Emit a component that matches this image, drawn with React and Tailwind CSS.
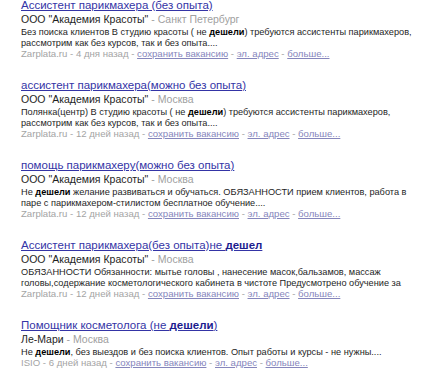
import React from 'react';

const jobs = [
  {
    title: [{ t: 'Ассистент парикмахера (без опыта)' }],
    company: 'ООО "Академия Красоты"',
    city: 'Санкт Петербург',
    snippet: [
      [
        { t: 'Без поиска клиентов В студию красоты ( не ' },
        { t: 'дешели', b: true },
        { t: ') требуются ассистенты парикмахеров,' },
      ],
      [{ t: 'рассмотрим как без курсов, так и без опыта....' }],
    ],
    source: 'Zarplata.ru',
    age: '4 дня назад',
  },
  {
    title: [{ t: 'ассистент парикмахера(можно без опыта)' }],
    company: 'ООО "Академия Красоты"',
    city: 'Москва',
    snippet: [
      [
        { t: 'Полянка(центр) В студию красоты ( не ' },
        { t: 'дешели', b: true },
        { t: ') требуются ассистенты парикмахеров,' },
      ],
      [{ t: 'рассмотрим как без курсов, так и без опыта....' }],
    ],
    source: 'Zarplata.ru',
    age: '12 дней назад',
  },
  {
    title: [{ t: 'помощь парикмахеру(можно без опыта)' }],
    company: 'ООО "Академия Красоты"',
    city: 'Москва',
    snippet: [
      [
        { t: 'Не ' },
        { t: 'дешели', b: true },
        { t: ' желание развиваться и обучаться. ОБЯЗАННОСТИ прием клиентов, работа в' },
      ],
      [{ t: 'паре с парикмахером-стилистом бесплатное обучение....' }],
    ],
    source: 'Zarplata.ru',
    age: '12 дней назад',
  },
  {
    title: [{ t: 'Ассистент парикмахера(без опыта)не ' }, { t: 'дешел', b: true }],
    company: 'ООО "Академия Красоты"',
    city: 'Москва',
    snippet: [
      [{ t: 'ОБЯЗАННОСТИ Обязанности: мытье головы , нанесение масок,бальзамов, массаж' }],
      [{ t: 'головы,содержание косметологического кабинета в чистоте Предусмотрено обучение за' }],
    ],
    source: 'Zarplata.ru',
    age: '12 дней назад',
  },
  {
    title: [{ t: 'Помощник косметолога (не ' }, { t: 'дешели', b: true }, { t: ')' }],
    company: 'Ле-Мари',
    city: 'Москва',
    snippet: [
      [
        { t: 'Не ' },
        { t: 'дешели', b: true },
        { t: ', без выездов и без поиска клиентов. Опыт работы и курсы - не нужны....' },
      ],
    ],
    source: 'ISIO',
    age: '6 дней назад',
  },
];

function JobResult({ job }) {
  return (
    <div className="whitespace-nowrap">
      <a href="#" className="block text-[11.5px] leading-[11px] text-[#3434a6] underline underline-offset-[1px] decoration-[#3434a6]">
        {job.title.map((p, i) => (
          <span key={i} className={p.b ? 'font-bold text-[#1c1c8e]' : ''}>{p.t}</span>
        ))}
      </a>
      <div className="mt-[2px] text-[10.5px] leading-[12px] text-[#1e1e1e]">
        {job.company} <span className="text-[#a0a0a0]">- {job.city}</span>
      </div>
      <div className="mt-[2px] text-[9.2px] leading-[11px] text-[#1e1e1e]">
        {job.snippet.map((line, li) => (
          <div key={li}>
            {line.map((p, i) => (
              <span key={i} className={p.b ? 'font-bold text-black' : ''}>{p.t}</span>
            ))}
          </div>
        ))}
      </div>
      <div className="text-[9.6px] leading-[10px] text-[#a4a4a4]">
        {job.source} - {job.age} -{' '}
        <a href="#" className="text-[#8686bc] underline">сохранить вакансию</a> -{' '}
        <a href="#" className="text-[#8686bc] underline">эл. адрес</a> -{' '}
        <a href="#" className="text-[#8686bc] underline">больше...</a>
      </div>
    </div>
  );
}

export default function App() {
  return (
    <div className="w-[434px] h-[384px] bg-white overflow-hidden pl-[21px]" style={{ fontFamily: '"Liberation Sans", Arial, sans-serif' }}>
      <div className="flex flex-col gap-[21px]">
        {jobs.map((job, i) => (
          <JobResult key={i} job={job} />
        ))}
      </div>
    </div>
  );
}
